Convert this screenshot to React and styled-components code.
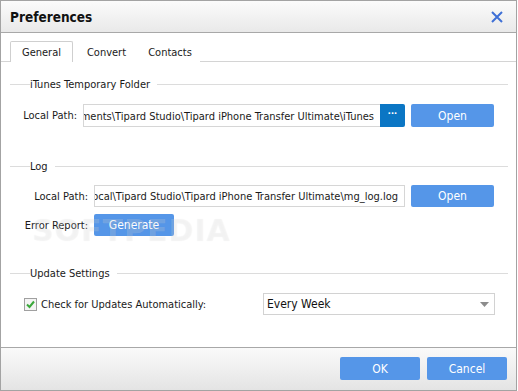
import styled, { createGlobalStyle } from "styled-components";

const GlobalStyle = createGlobalStyle`
  html, body {
    margin: 0;
    padding: 0;
    background: #ffffff;
  }
  body {
    font-family: "DejaVu Sans Condensed", "DejaVu Sans", sans-serif;
    font-stretch: condensed;
    font-size: 11px;
    color: #1a1a1a;
  }
`;

const Window = styled.div`
  position: relative;
  width: 515px;
  height: 389px;
  border: 1px solid #a3a3a3;
  display: flex;
  flex-direction: column;
  background: #ffffff;
  overflow: hidden;
`;

const TitleBar = styled.div`
  height: 31px;
  border-bottom: 1px solid #a8a8a8;
  background: linear-gradient(#fbfbfb, #e9e9e9);
  display: flex;
  align-items: center;
  justify-content: space-between;
  padding: 0 13px 0 9px;
`;

const Title = styled.h1`
  margin: 0;
  font-size: 13.5px;
  font-weight: bold;
  color: #111;
`;

const CloseButton = styled.button`
  border: 0;
  background: none;
  padding: 0;
  width: 12px;
  height: 12px;
  display: flex;
  cursor: pointer;
`;

const TabStrip = styled.div`
  height: 21px;
  margin-top: 7px;
  border-bottom: 1px solid #d4d4d4;
  display: flex;
  align-items: flex-end;
  padding-left: 9px;
`;

const Tab = styled.div`
  height: ${(p) => (p.$active ? "21px" : "20px")};
  box-sizing: border-box;
  width: ${(p) => p.$width}px;
  display: flex;
  align-items: center;
  justify-content: center;
  border: 1px solid ${(p) => (p.$active ? "#cfcfcf" : "transparent")};
  border-bottom: 0;
  border-radius: 2px 2px 0 0;
  background: #fff;
  margin-bottom: -1px;
  color: #1a1a1a;
`;

const Content = styled.div`
  flex: 1;
  padding: 15px 8px 0 9px;
  display: flex;
  flex-direction: column;
`;

const SectionHeader = styled.div`
  display: flex;
  align-items: center;
  height: 14px;
  margin-top: ${(p) => p.$top || 0}px;

  &::before {
    content: "";
    width: 20px;
    height: 1px;
    background: #dcdcdc;
  }
  &::after {
    content: "";
    flex: 1;
    height: 1px;
    background: #dcdcdc;
    margin-left: 7px;
  }
`;

const HeaderText = styled.span`
  color: #1a1a1a;
`;

const Row = styled.div`
  display: grid;
  grid-template-columns: ${(p) => p.$label}px ${(p) => p.$field}px 6px 83px;
  align-items: center;
  height: ${(p) => p.$h || 22}px;
  margin-top: ${(p) => p.$top || 0}px;
`;

const Label = styled.span`
  text-align: right;
  padding-right: 6px;
  white-space: nowrap;
`;

const PathField = styled.div`
  grid-column: 2;
  flex: 1;
  height: 100%;
  box-sizing: border-box;
  border: 1px solid #d6d6d6;
  border-right: ${(p) => (p.$joined ? "0" : "1px solid #d6d6d6")};
  overflow: hidden;
  position: relative;
`;

const PathText = styled.span`
  position: absolute;
  top: 50%;
  transform: translateY(-50%);
  right: ${(p) => p.$pad}px;
  white-space: nowrap;
  color: #1a1a1a;
`;

const FieldGroup = styled.div`
  grid-column: 2;
  height: 100%;
  display: flex;
`;

const BrowseButton = styled.button`
  width: 25px;
  flex: none;
  height: 100%;
  border: 0;
  padding: 0;
  background: #0b76c4;
  color: #fff;
  font-weight: bold;
  font-size: 11px;
  letter-spacing: -0.5px;
  line-height: 1;
  border-radius: 0 2px 2px 0;
  display: flex;
  align-items: center;
  justify-content: center;
  padding-bottom: 4px;
  box-sizing: border-box;
`;

const BlueButton = styled.button`
  grid-column: ${(p) => p.$col || "auto"};
  width: ${(p) => p.$width || 83}px;
  height: ${(p) => p.$height || 23}px;
  border: 0;
  border-radius: 2px;
  background: #5596e8;
  color: #fff;
  font-family: inherit;
  font-stretch: condensed;
  font-size: 12px;
  padding: 0;
  cursor: pointer;
`;

const CheckRow = styled.div`
  display: flex;
  align-items: center;
  height: 22px;
  margin-top: 13px;
  padding-left: 14px;
`;

const CheckLabel = styled.label`
  display: flex;
  align-items: center;
  gap: 4px;
  width: 239px;
  white-space: nowrap;
`;

const Select = styled.div`
  width: 232px;
  height: 22px;
  box-sizing: border-box;
  border: 1px solid #d2d2d2;
  display: flex;
  align-items: center;
  justify-content: space-between;
  padding: 0 5px 0 3px;
  font-size: 12px;
  color: #111;
`;

const Footer = styled.div`
  height: 43px;
  border-top: 1px solid #a8a8a8;
  background: linear-gradient(#fafafa, #e4e4e4);
  display: flex;
  justify-content: flex-end;
  align-items: flex-start;
  padding: 9px 9px 0 0;
  box-sizing: border-box;
  gap: 7px;
`;

const Watermark = styled.div`
  position: absolute;
  left: 31px;
  top: 212px;
  font-family: "DejaVu Sans", sans-serif;
  font-stretch: normal;
  font-size: 30px;
  font-weight: bold;
  letter-spacing: 1px;
  color: rgba(255, 255, 255, 0.2);
  text-shadow: 0 0 1px rgba(0, 0, 0, 0.06);
  pointer-events: none;
`;

function CloseIcon() {
  return (
    <svg width="12" height="12" viewBox="0 0 12 12">
      <path d="M1 1 L11 11 M11 1 L1 11" stroke="#3f70d6" strokeWidth="2" />
    </svg>
  );
}

function CheckBox() {
  return (
    <svg width="13" height="13" viewBox="0 0 13 13">
      <rect x="0.5" y="0.5" width="12" height="12" fill="#f4f4f4" stroke="#a0a0a0" />
      <path d="M3 6.5 L5.5 9 L10 3.5" fill="none" stroke="#3aa83a" strokeWidth="2" />
    </svg>
  );
}

function Arrow() {
  return (
    <svg width="9" height="5" viewBox="0 0 9 5">
      <path d="M0 0 H9 L4.5 5 Z" fill="#8c8c8c" />
    </svg>
  );
}

export default function App() {
  return (
    <>
      <GlobalStyle />
      <Window>
        <TitleBar>
          <Title>Preferences</Title>
          <CloseButton aria-label="Close">
            <CloseIcon />
          </CloseButton>
        </TitleBar>
        <TabStrip>
          <Tab $active $width={63}>General</Tab>
          <Tab $width={67}>Convert</Tab>
          <Tab $width={60}>Contacts</Tab>
        </TabStrip>
        <Content>
          <SectionHeader>
            <HeaderText>iTunes Temporary Folder</HeaderText>
          </SectionHeader>
          <Row $label={73} $field={322} $h={23} $top={13}>
            <Label>Local Path:</Label>
            <FieldGroup>
              <PathField $joined>
                <PathText $pad={6}>
                  C:\Users\User\Documents\Tipard Studio\Tipard iPhone Transfer Ultimate\iTunes
                </PathText>
              </PathField>
              <BrowseButton>···</BrowseButton>
            </FieldGroup>
            <BlueButton $col={4}>Open</BlueButton>
          </Row>

          <SectionHeader $top={32}>
            <HeaderText>Log</HeaderText>
          </SectionHeader>
          <Row $label={84} $field={311} $top={12}>
            <Label>Local Path:</Label>
            <PathField>
              <PathText $pad={6}>
                C:\Users\User\AppData\Local\Tipard Studio\Tipard iPhone Transfer Ultimate\mg_log.log
              </PathText>
            </PathField>
            <BlueButton $col={4} $height={22}>Open</BlueButton>
          </Row>
          <Row $label={84} $field={311} $top={7}>
            <Label>Error Report:</Label>
            <BlueButton $col={2} $width={80} $height={22}>Generate</BlueButton>
          </Row>

          <SectionHeader $top={30}>
            <HeaderText>Update Settings</HeaderText>
          </SectionHeader>
          <CheckRow>
            <CheckLabel>
              <CheckBox />
              Check for Updates Automatically:
            </CheckLabel>
            <Select>
              <span>Every Week</span>
              <Arrow />
            </Select>
          </CheckRow>
        </Content>
        <Footer>
          <BlueButton $width={80}>OK</BlueButton>
          <BlueButton $width={80}>Cancel</BlueButton>
        </Footer>
        <Watermark>SOFTPEDIA</Watermark>
      </Window>
    </>
  );
}
